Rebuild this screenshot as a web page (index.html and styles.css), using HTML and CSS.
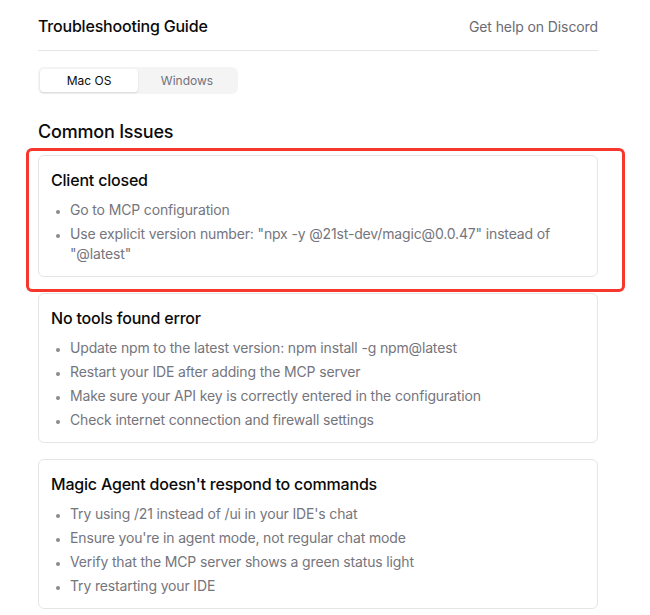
FILE: index.html
```html
<!DOCTYPE html>
<html lang="en">
<head>
  <meta charset="UTF-8">
  <title>Troubleshooting Guide</title>
  <link rel="stylesheet" href="styles.css">
</head>
<body>
  <div class="guide">
    <div class="header">
      <h1 class="title">Troubleshooting Guide</h1>
      <a class="discord" href="#">Get help on Discord</a>
    </div>

    <div class="tabs">
      <button class="tab active">Mac OS</button>
      <button class="tab">Windows</button>
    </div>

    <h2 class="section-title">Common Issues</h2>

    <div class="issues">
      <div class="issue highlighted">
        <h3>Client closed</h3>
        <ul>
          <li>Go to MCP configuration</li>
          <li>Use explicit version number: "npx -y @21st-dev/magic@0.0.47" instead of "@latest"</li>
        </ul>
        <div class="highlight-box"></div>
      </div>

      <div class="issue">
        <h3>No tools found error</h3>
        <ul>
          <li>Update npm to the latest version: npm install -g npm@latest</li>
          <li>Restart your IDE after adding the MCP server</li>
          <li>Make sure your API key is correctly entered in the configuration</li>
          <li>Check internet connection and firewall settings</li>
        </ul>
      </div>

      <div class="issue">
        <h3>Magic Agent doesn't respond to commands</h3>
        <ul>
          <li>Try using /21 instead of /ui in your IDE's chat</li>
          <li>Ensure you're in agent mode, not regular chat mode</li>
          <li>Verify that the MCP server shows a green status light</li>
          <li>Try restarting your IDE</li>
        </ul>
      </div>
    </div>
  </div>
</body>
</html>
```

FILE: styles.css
```css
body {
  margin: 0;
  font-family: Inter, "Noto Sans", sans-serif;
  background-color: #fff;
  color: #0a0a0a;
}

.guide {
  width: 560px;
  padding-left: 38px;
}

.header {
  display: flex;
  justify-content: space-between;
  align-items: center;
  padding: 14px 0 12px;
  border-bottom: 1px solid #e5e5e5;
}

.title {
  margin: 0;
  font-size: 16px;
  font-weight: 500;
  line-height: 24px;
  letter-spacing: -0.2px;
}

.discord {
  font-size: 14px;
  color: #6b6b73;
  text-decoration: none;
  letter-spacing: -0.1px;
}

.tabs {
  display: inline-flex;
  margin-top: 16px;
  padding: 2px;
  background-color: #f4f4f5;
  border-radius: 6px;
}

.tab {
  width: 98px;
  height: 23px;
  border: none;
  border-radius: 4px;
  background: transparent;
  font-family: inherit;
  font-size: 12px;
  color: #71717a;
  cursor: pointer;
}

.tab.active {
  background-color: #fff;
  color: #0a0a0a;
  box-shadow: 0 1px 2px rgba(0, 0, 0, 0.12);
}

.section-title {
  margin: 24px 0 9px;
  font-size: 18px;
  font-weight: 500;
  line-height: 28px;
  letter-spacing: -0.2px;
}

.issues {
  display: flex;
  flex-direction: column;
  gap: 16px;
}

.issue {
  position: relative;
  border: 1px solid #e5e5e5;
  border-radius: 6px;
  padding: 12px;
}

.issue h3 {
  margin: 0 0 8px;
  font-size: 16px;
  font-weight: 500;
  line-height: 24px;
  letter-spacing: -0.2px;
}

.issue ul {
  margin: 0;
  padding-left: 19px;
  display: flex;
  flex-direction: column;
  gap: 4px;
}

.issue li {
  font-size: 14px;
  line-height: 20px;
  color: #75757d;
  letter-spacing: -0.15px;
}

.issue li::marker {
  font-size: 11px;
  color: #8a8a92;
}

.highlight-box {
  position: absolute;
  top: -8px;
  left: -13px;
  right: -28px;
  bottom: -16px;
  border: 3px solid #f5372e;
  border-radius: 6px;
  pointer-events: none;
}
```
